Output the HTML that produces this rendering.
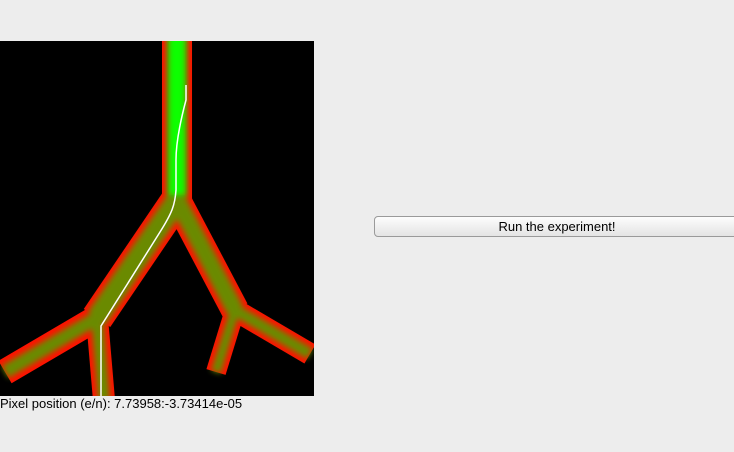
<!DOCTYPE html>
<html><head><style>
body{margin:0;width:734px;height:452px;background:#ededed;position:relative;overflow:hidden;font-family:"Liberation Sans",sans-serif}
#btn{position:absolute;left:374px;top:216px;width:366px;height:21px;box-sizing:border-box;border:1px solid #9a9a9a;border-radius:4px;background:linear-gradient(#fdfdfd,#f0f0f0 50%,#e4e4e4);font-size:13px;text-align:center;line-height:19px;color:#000}
#txt{position:absolute;left:0px;top:396px;font-size:13px;color:#000;line-height:16px}
</style></head><body>
<svg width="314" height="355" style="position:absolute;left:0;top:41px" viewBox="0 41 314 355">
<defs><filter id="b" filterUnits="userSpaceOnUse" x="-50" y="0" width="420" height="450"><feGaussianBlur stdDeviation="3"/></filter>
<clipPath id="c"><rect x="0" y="41" width="314" height="355"/></clipPath></defs>
<rect x="0" y="41" width="314" height="355" fill="#000"/>
<g clip-path="url(#c)" stroke-linecap="butt" fill="none">
<g stroke="#ff1000">
<path d="M177 30 L177 205" stroke-width="30"/>
<path d="M177 200 L97 318" stroke-width="32"/>
<path d="M177 200 L235 310" stroke-width="28"/>
<path d="M97 318 L5 372" stroke-width="26"/>
<path d="M97 318 L104 400" stroke-width="22"/>
<path d="M235 310 L310 354" stroke-width="22"/>
<path d="M235 310 L216 372" stroke-width="20"/>
</g>
<g stroke="#6a8a00" filter="url(#b)">
<path d="M177 30 L177 205" stroke-width="20"/>
<path d="M177 200 L97 318" stroke-width="22"/>
<path d="M177 200 L235 310" stroke-width="18"/>
<path d="M97 318 L5 372" stroke-width="14"/>
<path d="M97 318 L104 400" stroke-width="12"/>
<path d="M235 310 L310 354" stroke-width="12"/>
<path d="M235 310 L216 372" stroke-width="10"/>
</g>
<path d="M177 20 L177 195" stroke="#10ff00" stroke-width="16" filter="url(#b)"/>
<path d="M186 85 L186 100 C182 115 176 140 176 160 L176 190 C175 205 172 213 160 232 L101 326 L101 396" stroke="#fff" stroke-width="1.5"/>
</g>
</svg>
<div id="btn">Run the experiment!</div>
<div id="txt">Pixel position (e/n): 7.73958:-3.73414e-05</div>
</body></html>
